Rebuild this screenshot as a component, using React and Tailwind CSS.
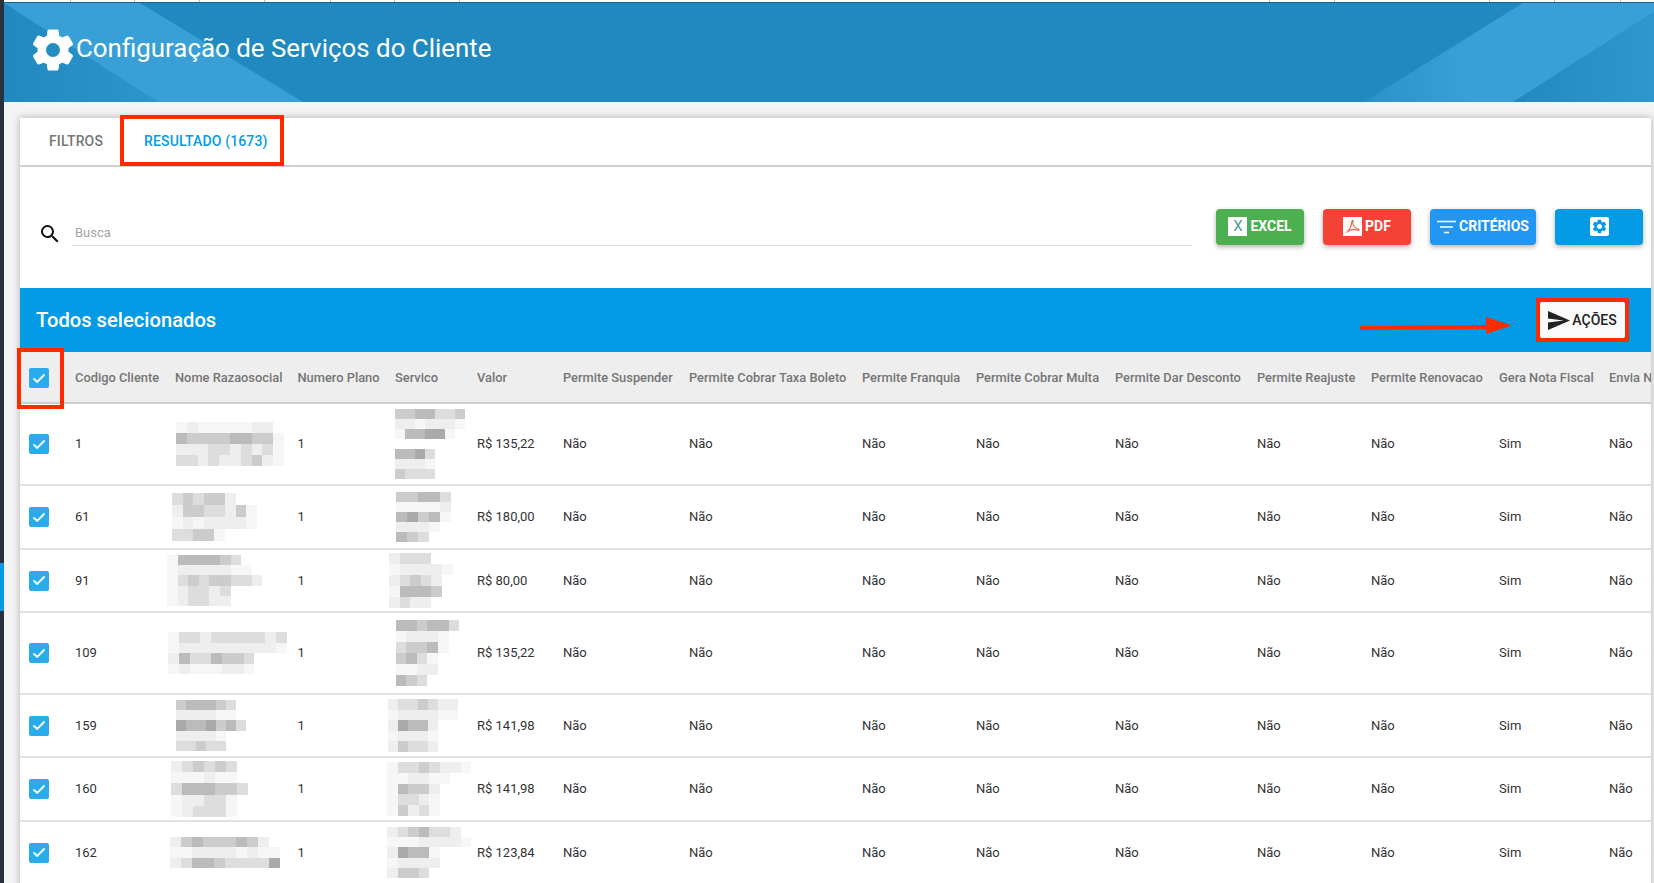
import React from 'react';

const GEAR = 'M19.14 12.94c.04-.3.06-.61.06-.94 0-.32-.02-.64-.07-.94l2.03-1.58c.18-.14.23-.41.12-.61l-1.92-3.32c-.12-.22-.37-.29-.59-.22l-2.39.96c-.5-.38-1.03-.7-1.62-.94l-.36-2.54c-.04-.24-.24-.41-.48-.41h-3.84c-.24 0-.43.17-.47.41l-.36 2.54c-.59.24-1.13.57-1.62.94l-2.39-.96c-.22-.08-.47 0-.59.22L2.74 8.87c-.12.21-.08.47.12.61l2.03 1.58c-.05.3-.09.63-.09.94s.02.64.07.94l-2.03 1.58c-.18.14-.23.41-.12.61l1.92 3.32c.12.22.37.29.59.22l2.39-.96c.5.38 1.03.7 1.62.94l.36 2.54c.05.24.24.41.48.41h3.84c.24 0 .44-.17.47-.41l.36-2.54c.59-.24 1.13-.56 1.62-.94l2.39.96c.22.08.47 0 .59-.22l1.92-3.32c.12-.22.07-.47-.12-.61l-2.01-1.58zM12 15.6c-1.98 0-3.6-1.62-3.6-3.6s1.62-3.6 3.6-3.6 3.6 1.62 3.6 3.6-1.62 3.6-3.6 3.6z';

const COLUMNS = [
  ['', 55], ['Codigo Cliente', 100], ['Nome Razaosocial', 122.5], ['Numero Plano', 97.5], ['Servico', 82],
  ['Valor', 86], ['Permite Suspender', 126], ['Permite Cobrar Taxa Boleto', 173], ['Permite Franquia', 114],
  ['Permite Cobrar Multa', 139], ['Permite Dar Desconto', 142], ['Permite Reajuste', 114],
  ['Permite Renovacao', 128], ['Gera Nota Fiscal', 110], ['Envia Nota Fiscal', 42],
];

// each letter is a grey level of the pixelated (censored) text, '.' leaves a hole
const ROWS = [
  {
    id: '1', valor: 'R$ 135,22', height: 82,
    nome: { x: 176, bw: 10.8, bh: 11, rows: ['fefffffee', 'bccccbbccf', 'eeeddededf', 'ddedeedcef'] },
    servico: { x: 395, bw: 10, bh: 10, rows: ['ccbbddc', 'eefeeef', 'fbbaaf', '', 'bbad', 'eeef', 'cddd'] },
  },
  {
    id: '61', valor: 'R$ 180,00', height: 64,
    nome: { x: 172, bw: 10.6, bh: 12, rows: ['dcdcce', 'eccddecf', 'fefeeeef', 'ddccf'] },
    servico: { x: 396, bw: 11, bh: 10, rows: ['ccbbd', 'ffffe', 'bacbf', 'eeef', 'bcd'] },
  },
  {
    id: '91', valor: 'R$ 80,00', height: 63,
    nome: { x: 167, bw: 10.6, bh: 10.4, rows: ['fbbbbcd', 'feeeeeff', 'fdcdccdde', 'fedded', 'feddee'] },
    servico: { x: 389, bw: 10.6, bh: 11, rows: ['eddd', 'feeeef', 'edcde', 'fbbbc', 'edee'] },
  },
  {
    id: '109', valor: 'R$ 135,22', height: 82,
    nome: { x: 168, bw: 10.8, bh: 10.5, rows: ['fddeddddded', 'feeeeeeeeef', 'ebddbccd', 'fefffeef'] },
    servico: { x: 385, bw: 10.6, bh: 11, rows: ['.bbcbbd', '.feeef', '.dccbf', '.cbdf', '.ffee', '.bcd'] },
  },
  {
    id: '159', valor: 'R$ 141,98', height: 63,
    nome: { x: 166, bw: 10, bh: 10.4, rows: ['.cbbbcd', '.eeeeff', '.abbacbd', '.eeeef', '.ddcdd'] },
    servico: { x: 388, bw: 10, bh: 10.6, rows: ['eddcdee', 'feeeeff', 'eabbe', 'feeef', 'ecdde'] },
  },
  {
    id: '160', valor: 'R$ 141,98', height: 64,
    nome: { x: 171, bw: 11, bh: 11.4, rows: ['edcdcd', 'fffeff', 'dbbbccd', 'feeddf', 'fedddf'] },
    servico: { x: 387, bw: 10.5, bh: 10.8, rows: ['fddcdeef', 'ffeeff', 'fbcce', 'fddef', 'fcedf'] },
  },
  {
    id: '162', valor: 'R$ 123,84', height: 63,
    nome: { x: 170, bw: 11, bh: 10.4, rows: ['ecbcccbce', 'ffeeeefeff', 'edbbcdddda'] },
    servico: { x: 387, bw: 10.5, bh: 10.4, rows: ['edcbdde', 'fffeeeef', 'eabbf', 'feeee', 'eccd'] },
  },
];

const FLAGS = ['Não', 'Não', 'Não', 'Não', 'Não', 'Não', 'Não', 'Sim', 'Não'];

const blockColor = c => {
  if (c === '.') return 'transparent';
  if (c === 'f') return '#f6f6f6';
  return `#${c}${c}${c}`;
};

function Mosaic({ x, colX, bw, bh, rows }) {
  return (
    <div style={{ marginLeft: x - colX }}>
      {rows.map((row, i) => (
        <div key={i} className="flex" style={{ height: bh }}>
          {row.split('').map((c, j) => (
            <div key={j} className="shrink-0" style={{ width: bw, height: bh, backgroundColor: blockColor(c) }} />
          ))}
        </div>
      ))}
    </div>
  );
}

function Checkbox() {
  return (
    <div className="w-5 h-5 rounded-[2px] bg-[#29abec] flex items-center justify-center">
      <svg width="14" height="11" viewBox="0 0 14 11" fill="none" stroke="white" strokeWidth="1.8">
        <path d="M1.5 5.5 5.2 9 12.5 1.5" />
      </svg>
    </div>
  );
}

function ToolButton({ color, width, children }) {
  return (
    <button
      className={`${color} ${width} h-9 shrink-0 rounded-[4px] flex items-center justify-center gap-[3px] text-white text-[14px] font-bold shadow-[0_2px_5px_rgba(0,0,0,0.3)]`}
    >
      {children}
    </button>
  );
}

function Header() {
  return (
    <div className="relative h-[100px] bg-[#2089bf] border-t border-[#17658f] flex items-center">
      <svg className="absolute inset-0 w-full h-full" viewBox="0 0 1650 100" preserveAspectRatio="none">
        <defs>
          <linearGradient id="leftFade" x1="0" x2="1" y1="0" y2="0">
            <stop offset="0" stopColor="#2089bf" />
            <stop offset="1" stopColor="#2c95ca" />
          </linearGradient>
          <linearGradient id="rightBand" x1="0" x2="1" y1="0" y2="0">
            <stop offset="0" stopColor="#2a92c8" />
            <stop offset="0.35" stopColor="#38a0d6" />
            <stop offset="1" stopColor="#38a0d6" />
          </linearGradient>
          <linearGradient id="rightFade" x1="0" x2="1" y1="0" y2="0">
            <stop offset="0" stopColor="#2289bf" />
            <stop offset="1" stopColor="#2e97cd" />
          </linearGradient>
        </defs>
        <polygon points="0,100 0,0 154,100" fill="url(#leftFade)" />
        <polygon points="0,0 136,0 299,100 154,100" fill="#38a0d6" />
        <polygon points="1519,0 1650,0 1650,9 1509,100 1360,100" fill="url(#rightBand)" />
        <polygon points="1650,9 1650,100 1509,100" fill="url(#rightFade)" />
      </svg>
      <div className="relative flex items-center pl-[24px] pb-[5px]">
        <svg width="50" height="50" viewBox="0 0 24 24" fill="white" stroke="white" strokeWidth="0.5" className="shrink-0">
          <path d={GEAR} fillRule="evenodd" />
        </svg>
        <h1 className="text-[25.9px] leading-8 text-white mb-[4px] ml-[-2px]">Configuração de Serviços do Cliente</h1>
      </div>
    </div>
  );
}

function Tabs() {
  return (
    <div className="flex h-[49px] border-b-2 border-[#cfcfcf] text-[14px] font-medium tracking-[0.15px]">
      <button className="w-[100px] pl-[29px] text-left text-[#757575]">FILTROS</button>
      <button className="relative w-[164px] pl-[24px] text-left text-[#039be5]">
        RESULTADO (1673)
        <span className="absolute left-0 right-0 -top-[3px] -bottom-[1px] border-[4px] border-[#ff2a00]" />
      </button>
    </div>
  );
}

function Toolbar() {
  return (
    <div className="flex items-center h-[121px] pl-[18px] pr-[8px]">
      <svg width="24" height="24" viewBox="0 0 24 24" fill="#111" className="shrink-0 mr-[10px] mt-[12px]">
        <path d="M15.5 14h-.79l-.28-.27A6.471 6.471 0 0 0 16 9.5 6.5 6.5 0 1 0 9.5 16c1.61 0 3.09-.59 4.23-1.57l.27.28v.79l5 4.99L20.49 19l-4.99-5zm-6 0C7.01 14 5 11.99 5 9.5S7.01 5 9.5 5 14 7.01 14 9.5 11.99 14 9.5 14z" />
      </svg>
      <input
        placeholder="Busca"
        className="w-[1120px] mr-[24px] mt-[8px] h-[28px] px-[3px] pt-[2px] border-b border-[#ddd] text-[13px] placeholder:text-[#a5a5a5] outline-none"
      />
      <div className="flex gap-[19px] mb-[2px]">
        <ToolButton color="bg-[#4caf50]" width="w-[88px]">
          <span className="w-[19px] h-[19px] bg-white flex items-center justify-center text-[#4a9f8a] text-[15px] font-normal">X</span>
          EXCEL
        </ToolButton>
        <ToolButton color="bg-[#f44336]" width="w-[88px]">
          <span className="w-[19px] h-[19px] bg-white flex items-center justify-center">
            <svg width="15" height="15" viewBox="0 0 16 16" fill="none" stroke="#f2604f" strokeWidth="1.2">
              <path d="M1.5 14.5C4 13 7 7.5 7.5 2c.1-1 1.2-1 1 .3C8 6 10.5 9.5 14.5 11c1 .4.4 1.3-.6 1-3-.8-7-.8-9.5.4-1.300.8-2.100 1.400-2.900 2.100z" />
            </svg>
          </span>
          PDF
        </ToolButton>
        <ToolButton color="bg-[#2196f3]" width="w-[106px]">
          <svg width="19" height="14" viewBox="0 0 19 14" stroke="white" strokeWidth="1.4">
            <path d="M0 1.500h19M3 7h13M7 12.500h5" />
          </svg>
          CRITÉRIOS
        </ToolButton>
        <ToolButton color="bg-[#039be5]" width="w-[88px]">
          <span className="w-[19px] h-[19px] rounded-[2px] bg-white flex items-center justify-center">
            <svg width="17" height="17" viewBox="0 0 24 24" fill="#039be5">
              <path d={GEAR} fillRule="evenodd" />
            </svg>
          </span>
        </ToolButton>
      </div>
    </div>
  );
}

function ActionBar() {
  return (
    <div className="h-[64px] bg-[#039be5] flex items-center justify-between pl-[16px] pr-[26px]">
      <h2 className="text-white text-[20.2px] font-medium">Todos selecionados</h2>
      <button className="relative w-[85px] h-9 bg-[#fafafa] rounded-[2px] flex items-center justify-center gap-[2px] text-[14px] font-medium text-[#222]">
        <svg width="22" height="19" viewBox="2 3 21 18" fill="#222" className="shrink-0">
          <path d="M2.010 21 23 12 2.010 3 2 10l15 2-15 2z" />
        </svg>
        AÇÕES
        <span className="absolute -inset-[4px] border-[4px] border-[#ff2a00]" />
        <svg width="152" height="18" viewBox="0 0 152 18" className="absolute right-full top-[15px] mr-[28px]" fill="#ff2a00">
          <path d="M0 9 126 8V0l26 8.500L126 17v-5L0 13z" />
        </svg>
      </button>
    </div>
  );
}

function ResultTable() {
  return (
    <table className="w-[1631px] table-fixed text-[13px] text-[#333]">
      <colgroup>
        {COLUMNS.map(([name, w], i) => <col key={i} style={{ width: w }} />)}
      </colgroup>
      <thead>
        <tr className="h-[51px] bg-[#eeeeee]">
          <th className="relative pl-[9px] pt-[2px] border-b-2 border-[#cfcfcf]">
            <Checkbox />
            <span className="absolute left-[-3px] top-[-4px] w-[47px] h-[61px] border-[4px] border-[#ff2a00] z-10" />
          </th>
          {COLUMNS.slice(1).map(([name]) => (
            <th key={name} className="text-left pt-[2px] text-[12.85px] font-medium text-[#757575] border-b-2 border-[#cfcfcf] overflow-hidden whitespace-nowrap">
              {name}
            </th>
          ))}
        </tr>
      </thead>
      <tbody>
        {ROWS.map(r => (
          <tr key={r.id} style={{ height: r.height }} className="border-b-2 border-[#e2e2e2]">
            <td className="pl-[9px]"><Checkbox /></td>
            <td>{r.id}</td>
            <td><Mosaic {...r.nome} colX={175} /></td>
            <td>1</td>
            <td><Mosaic {...r.servico} colX={395} /></td>
            <td>{r.valor}</td>
            {FLAGS.map((f, i) => <td key={i}>{f}</td>)}
          </tr>
        ))}
      </tbody>
    </table>
  );
}

export default function App() {
  return (
    <div className="flex h-[883px] overflow-hidden font-['Roboto',sans-serif] bg-white">
      <div className="w-[4px] shrink-0 flex flex-col bg-[#2b3040]">
        <div className="h-[563px] shrink-0" />
        <div className="h-[48px] shrink-0 bg-[#039be5]" />
      </div>
      <div className="flex-1 min-w-0">
        <svg className="block w-full h-[2px]" viewBox="0 0 1650 2" preserveAspectRatio="none" fill="#bbb">
          {[66, 130, 195, 260, 326, 390, 455, 1265, 1330, 1485, 1550, 1616].map(x => <rect key={x} x={x} width="1" height="2" />)}
        </svg>
        <Header />
        <div className="bg-[#f4f4f4] pl-[16px] pr-[3px] pt-[16px] h-[781px]">
          <div className="bg-white h-[800px] shadow-[0_0_8px_rgba(0,0,0,0.28)]">
            <Tabs />
            <Toolbar />
            <ActionBar />
            <ResultTable />
          </div>
        </div>
      </div>
    </div>
  );
}
